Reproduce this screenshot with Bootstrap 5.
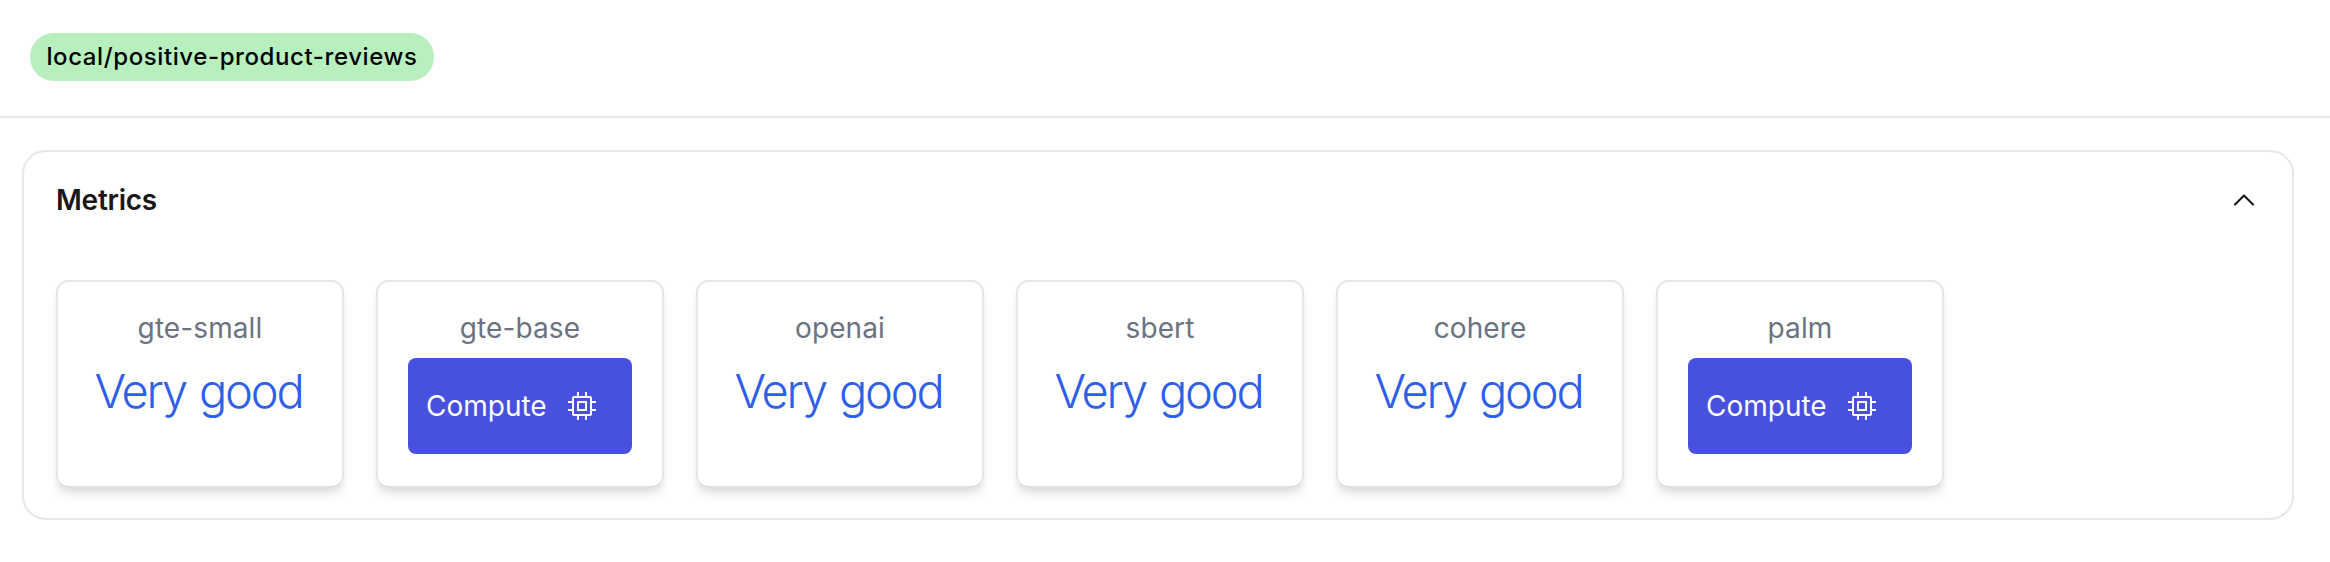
<!DOCTYPE html>
<html lang="en">
<head>
<meta charset="utf-8">
<title>Metrics</title>
<link href="https://cdn.jsdelivr.net/npm/bootstrap@5.3.0/dist/css/bootstrap.min.css" rel="stylesheet">
<style>
body{font-family:Inter,"Liberation Sans",sans-serif;background:#fff;color:#18181b;overflow:hidden}
.topbar{height:118px;border-bottom:2px solid #e5e7eb;padding:33px 30px 0}
.dataset-pill{height:48px;width:404px;background:#b7efbe;color:#000;font-size:24px;font-weight:500;line-height:48px}
.dataset-pill span,.panel-title,.metric-name,.metric-value,.btn-compute span{display:inline-block;white-space:nowrap}
.dataset-pill span{letter-spacing:.6px}
.panel{margin:32px 36px 0 22px;height:370px;border:2px solid #e5e7eb;border-radius:24px;padding:0 32px}
.panel-head{height:96px;padding-right:6px}
.panel-title{font-size:28px;font-weight:600;line-height:42px;letter-spacing:-.25px;margin:0}
.metrics{gap:32px;padding-top:32px}
.metric{width:288px;height:208px;border:2px solid #e5e7eb;border-bottom-color:#dfe0e3;border-radius:12px;padding:26px 30px 0;box-shadow:0 8px 12px -2px rgba(0,0,0,.1),0 4px 8px -4px rgba(0,0,0,.1)}
.metric-name{font-size:28px;line-height:41px;height:50px;color:#6b7280;letter-spacing:.1px}
.metric-value{font-size:47px;font-weight:300;line-height:66px;color:#2f5fe8;letter-spacing:-2.2px;word-spacing:2px;padding-right:3px}
.btn-compute{width:224px;height:96px;background:#4850e0;color:#fff;border:0;border-radius:8px;font-size:28px;font-weight:400;padding:0 36px 0 18px}
.btn-compute:hover{background:#3f46d0;color:#fff}
</style>
</head>
<body>
<svg class="d-none" xmlns="http://www.w3.org/2000/svg">
  <symbol id="chip" viewBox="0 0 28 28">
    <g fill="none" stroke="#fff" stroke-width="2">
      <rect x="5" y="5" width="18" height="18" rx="1"/>
      <rect x="10" y="10" width="8" height="8"/>
      <path d="M10 0v4M18 0v4M10 24v4M18 24v4M0 10h4M0 18h4M24 10h4M24 18h4"/>
    </g>
  </symbol>
</svg>
<header class="topbar">
  <div class="dataset-pill rounded-pill d-flex justify-content-center"><span>local/positive-product-reviews</span></div>
</header>
<main class="panel">
  <div class="panel-head d-flex align-items-center justify-content-between">
    <h2 class="panel-title">Metrics</h2>
    <svg width="20" height="12" viewBox="0 0 20 12" fill="none" stroke="#18181b" stroke-width="2.1" stroke-linecap="round" stroke-linejoin="round"><path d="M1 10.5 10 1.5l9 9"/></svg>
  </div>
  <div class="metrics d-flex">
    <section class="metric d-flex flex-column align-items-center"><div class="metric-name">gte-small</div><div class="metric-value">Very good</div></section>
    <section class="metric d-flex flex-column align-items-center"><div class="metric-name">gte-base</div><button class="btn btn-compute d-flex align-items-center justify-content-between"><span>Compute</span><svg width="28" height="28"><use href="#chip"/></svg></button></section>
    <section class="metric d-flex flex-column align-items-center"><div class="metric-name">openai</div><div class="metric-value">Very good</div></section>
    <section class="metric d-flex flex-column align-items-center"><div class="metric-name">sbert</div><div class="metric-value">Very good</div></section>
    <section class="metric d-flex flex-column align-items-center"><div class="metric-name">cohere</div><div class="metric-value">Very good</div></section>
    <section class="metric d-flex flex-column align-items-center"><div class="metric-name">palm</div><button class="btn btn-compute d-flex align-items-center justify-content-between"><span>Compute</span><svg width="28" height="28"><use href="#chip"/></svg></button></section>
  </div>
</main>
<script src="https://cdn.jsdelivr.net/npm/bootstrap@5.3.0/dist/js/bootstrap.bundle.min.js"></script>
</body>
</html>
